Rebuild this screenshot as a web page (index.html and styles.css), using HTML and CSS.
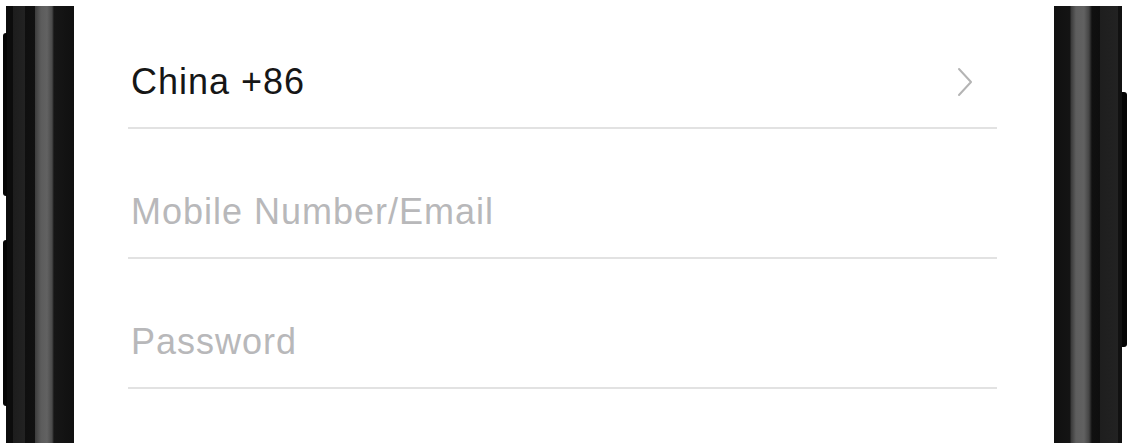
FILE: index.html
```html
<!DOCTYPE html>
<html lang="en">
<head>
  <meta charset="UTF-8" />
  <meta name="viewport" content="width=device-width, initial-scale=1" />
  <title>Log in</title>
  <link rel="stylesheet" href="styles.css">
</head>
<body>

  <!-- PHONE FRAME -->
  <div class="device">
    <div class="bezel bezel-left"></div>

    <main class="screen">
      <form class="login-form" autocomplete="off">
        <div class="row row-region">
          <span class="region">China +86</span>
          <svg class="chevron" width="16" height="30" viewBox="0 0 16 30">
            <polyline points="2,2 14,15 2,28" fill="none" stroke="#b4b4b4" stroke-width="2" stroke-linecap="round" stroke-linejoin="round" />
          </svg>
        </div>

        <div class="row">
          <input type="text" name="account" placeholder="Mobile Number/Email" />
        </div>

        <div class="row">
          <input type="password" name="password" placeholder="Password" />
        </div>
      </form>
    </main>

    <div class="bezel bezel-right"></div>
  </div>

</body>
</html>
```

FILE: styles.css
```css
/* Reset */
* {
  margin: 0; padding: 0; box-sizing: border-box;
}
body, html {
  height: 100%;
  font-family: 'Liberation Sans', Arial, sans-serif;
  background: #fff;
  color: #141414;
  overflow: hidden;
}
/* PHONE FRAME */
.device {
  display: flex;
  height: 437px;
  margin: 6px 9px 0 6px;
}
.bezel {
  position: relative;
  width: 68px;
  flex-shrink: 0;
}
.bezel-left {
  background: linear-gradient(to right,
    #0c0c0c 0, #0c0c0c 7px,
    #1d1d1d 7px, #222 19px,
    #0f0f0f 19px, #111 29px,
    #3c3c3c 29px, #5c5c5c 35px, #626262 41px, #4a4a4a 46px,
    #161616 48px, #101010 68px);
}
.bezel-right {
  background: linear-gradient(to right,
    #101010 0, #141414 16px,
    #3a3a3a 17px, #5e5e5e 22px, #616161 30px, #444 35px,
    #101010 38px, #0e0e0e 46px,
    #1e1e1e 46px, #222 64px,
    #111 64px, #111 68px);
}
/* side buttons */
.bezel-left::before,
.bezel-left::after,
.bezel-right::after {
  content: "";
  position: absolute;
  width: 4px;
  background: #050505;
}
.bezel-left::before {
  left: -3px;
  top: 27px;
  height: 163px;
  border-radius: 3px 0 0 3px;
}
.bezel-left::after {
  left: -3px;
  top: 234px;
  height: 166px;
  border-radius: 3px 0 0 3px;
}
.bezel-right::after {
  right: -5px;
  width: 5px;
  top: 86px;
  height: 255px;
  border-radius: 0 3px 3px 0;
}
/* SCREEN */
.screen {
  flex: 1;
  background: #fff;
  padding: 0 57px 0 54px;
}
.login-form {
  display: flex;
  flex-direction: column;
}
.row {
  display: flex;
  align-items: flex-end;
  height: 130px;
  padding: 0 0 27px 3px;
  border-bottom: 2px solid #e2e2e2;
}
.row-region {
  height: 123px;
}
.region,
input {
  font-family: 'Liberation Sans', Arial, sans-serif;
  font-size: 36px;
  line-height: 36px;
  letter-spacing: 1px;
}
.region {
  color: #161616;
}
.chevron {
  margin: 0 24px 3px auto;
}
input {
  width: 100%;
  height: 36px;
  border: none;
  outline: none;
  background: transparent;
  color: #161616;
  padding: 0;
}
input::placeholder {
  color: #b8b8ba;
  opacity: 1;
}
```
